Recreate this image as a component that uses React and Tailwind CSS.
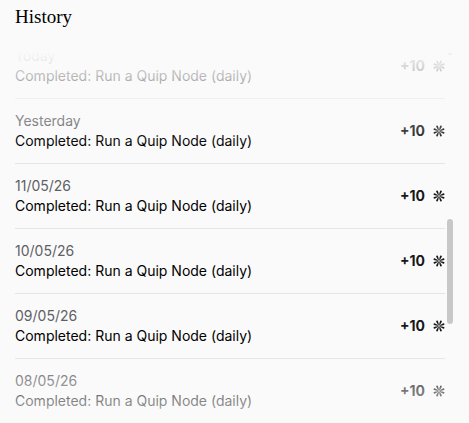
const history = [
  { date: "Today", title: "Completed: Run a Quip Node (daily)", points: 10 },
  { date: "Yesterday", title: "Completed: Run a Quip Node (daily)", points: 10 },
  { date: "11/05/26", title: "Completed: Run a Quip Node (daily)", points: 10 },
  { date: "10/05/26", title: "Completed: Run a Quip Node (daily)", points: 10 },
  { date: "09/05/26", title: "Completed: Run a Quip Node (daily)", points: 10 },
  { date: "08/05/26", title: "Completed: Run a Quip Node (daily)", points: 10 },
];

const petals = [0, 45, 90, 135, 180, 225, 270, 315];

function PointsIcon() {
  return (
    <svg viewBox="0 0 24 24" className="size-3 text-[#18181b]" fill="currentColor" aria-hidden="true">
      <circle cx="12" cy="12" r="4.5" opacity="0.4" />
      {petals.map((angle) => (
        <path
          key={angle}
          transform={`rotate(${angle + 22.5} 12 12)`}
          d="M12 10.5 L10.5 6 L10.2 1.8 Q10.2 0.6 11.3 0.6 H12.7 Q13.8 0.6 13.8 1.8 L13.5 6 Z"
        />
      ))}
    </svg>
  );
}

function HistoryRow({ date, title, points }) {
  return (
    <li className="flex items-center justify-between border-b border-[#e5e5e5] py-3 last:border-b-0">
      <div className="text-sm">
        <p className="text-[#5f5f66]">{date}</p>
        <p className="text-black">{title}</p>
      </div>
      <div className="flex items-center gap-2">
        <span className="text-sm font-bold text-[#18181b]">+{points}</span>
        <PointsIcon />
      </div>
    </li>
  );
}

export default function App() {
  return (
    <main className="h-screen overflow-hidden bg-[#fafafa] pt-1 pr-4 pl-[15px] font-['Inter',sans-serif]">
      <h2 className="font-['Book_Antiqua','Palatino_Linotype','Liberation_Serif',serif] text-[19px] leading-[26px] text-black">History</h2>

      <div className="relative mt-1">
        <ul className="pr-2 pb-6">
          {history.map((entry) => (
            <HistoryRow key={entry.date} {...entry} />
          ))}
        </ul>

        {/* Fades at both ends of the list */}
        <div className="pointer-events-none absolute inset-x-0 top-3 h-25 bg-linear-to-b from-[#fafafa] from-5% to-[#fafafa]/0" />
        <div className="pointer-events-none absolute inset-x-0 bottom-0 h-24 bg-linear-to-t from-[#fafafa] to-[#fafafa]/0" />

        {/* Scroll arrow and thumb */}
        <svg viewBox="0 0 6 3" className="absolute top-[18px] right-0 w-1.5 text-[#f0f0f0]" fill="currentColor" aria-hidden="true">
          <path d="M3 0 L6 3 H0 Z" />
        </svg>
        <div className="absolute top-[185px] right-0 h-[105px] w-1.5 rounded-full bg-[#c8c8c8]" />
      </div>
    </main>
  );
}
